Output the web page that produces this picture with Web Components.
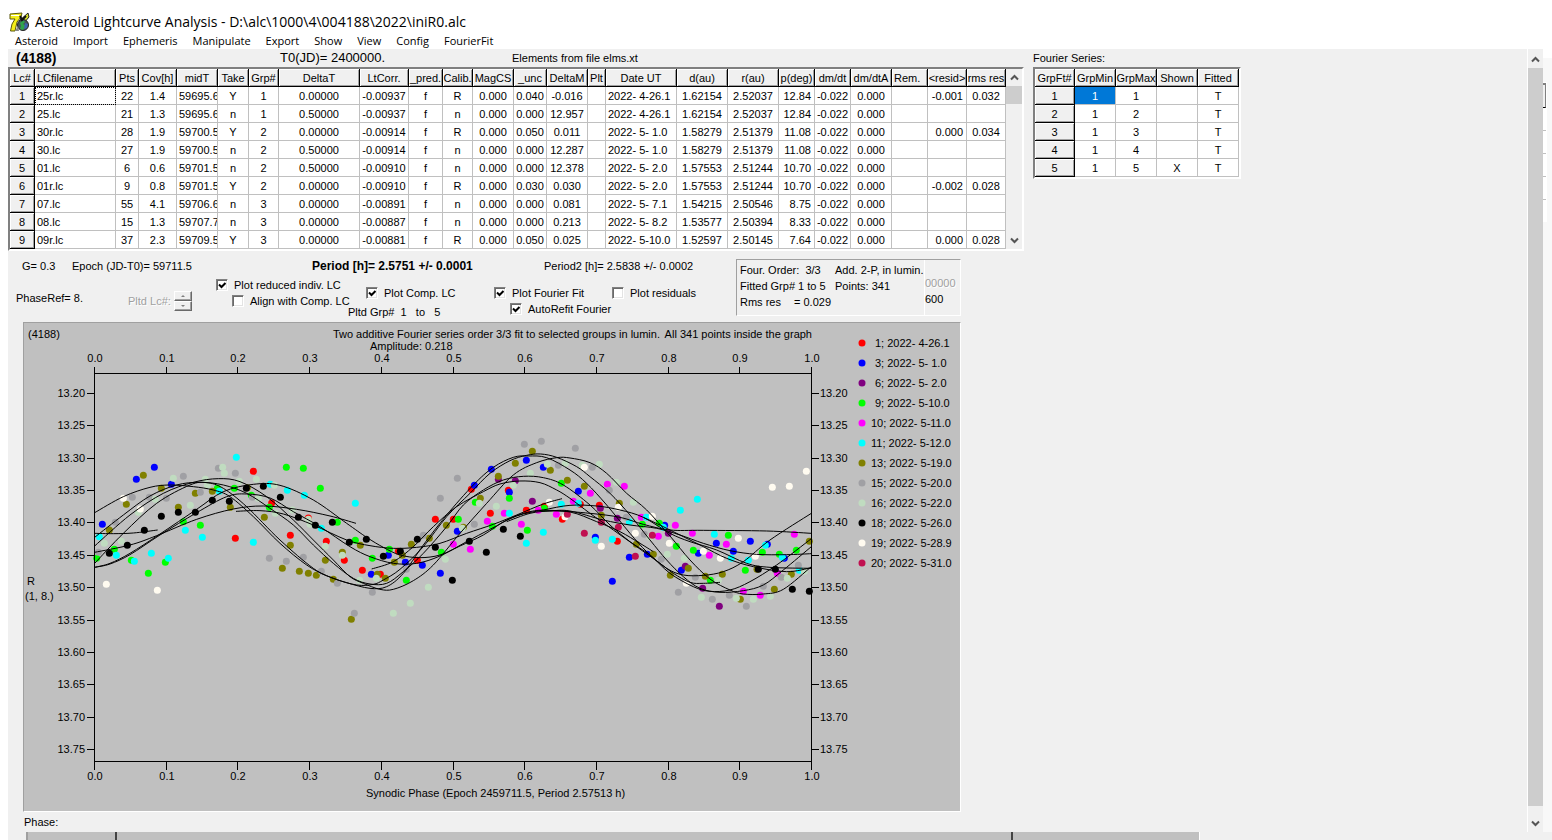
<!DOCTYPE html>
<html lang="en">
<head>
<meta charset="utf-8">
<title>Asteroid Lightcurve Analysis</title>
<style>
html,body{margin:0;height:100%;background:#fff;overflow:hidden}
body{font:11px/14px "Liberation Sans",Arial,sans-serif;color:#000}
</style>
</head>
<body>
<alc-window></alc-window>
<script>
const define = (name, css, html, setup) => customElements.define(name, class extends HTMLElement {
  constructor() {
    super();
    const root = this.attachShadow({mode: 'open'});
    root.innerHTML = `<style>*{box-sizing:border-box}button{font:inherit;color:inherit;border:0;background:none;padding:0;margin:0}${css}</style>${html}`;
    this.setup = setup;
  }
  connectedCallback() { if (this.setup && !this.ready) { this.ready = true; this.setup(this.shadowRoot); } }
});

/* Title bar with the application icon */
define('alc-title', `
:host{display:flex;align-items:center;gap:5px;height:33px;padding:11px 0 0 9px;font:14px/20px "Open Sans","Noto Sans",sans-serif;white-space:pre}
svg{display:block;flex:none}`, `
<svg width="21" height="21" viewBox="0 0 21 21" aria-hidden="true">
<path d="M1 2 L13 1 L12 5 L8 10 L6 19 L1.500 19 L3 12 L6 7 L1 7Z" fill="#f4ee18" stroke="#5a570c"/>
<path d="M2 3.500H10" stroke="#fff" stroke-width="1"/>
<path d="M10 9 L19 1 L20 5 L15 11Z" fill="#d9e02a" stroke="#222"/>
<circle cx="14" cy="13" r="5.500" fill="#45555c" stroke="#222"/>
<path d="M11 11q3-4 5-1l-2 2 3 2-3 4-3-1 1-3z" fill="#2fa34a"/>
<path d="M16 11l3 1-1 4-3 1z" fill="#3d62b0"/>
<path d="M11 4l2 4 4-4" fill="none" stroke="#111" stroke-width="2"/>
<path d="M6 19l3-5 1 5z" fill="#888"/>
</svg><slot></slot>`);

/* Menu bar */
define('alc-menu', `
:host{display:flex;gap:15px;height:16px;padding-left:15px;font:11px/16px "Open Sans","Noto Sans",sans-serif}`, '', root => {
  for (const t of ['Asteroid','Import','Ephemeris','Manipulate','Export','Show','View','Config','FourierFit']) {
    const b = document.createElement('button'); b.type = 'button'; b.textContent = t; root.append(b);
  }
});

/* Vertical scroll bar: thumb size is given in --thumb */
define('scroll-rail', `
:host{display:flex;flex-direction:column;width:16px;background:#f0f0f0}
button{flex:none;height:17px;display:flex;align-items:center;justify-content:center}
.track{flex:1;min-height:0}
.thumb{height:var(--thumb,20px);background:#cdcdcd}`, `
<button type="button" aria-label="Scroll up"><svg width="9" height="7"><path d="M1 5.500L4.500 2L8 5.500" fill="none" stroke="#555" stroke-width="2"/></svg></button>
<div class="track"><div class="thumb"></div></div>
<button type="button" aria-label="Scroll down"><svg width="9" height="7"><path d="M1 1.500L4.500 5L8 1.500" fill="none" stroke="#555" stroke-width="2"/></svg></button>`);

/* Spreadsheet grid with fixed first row and column */
const GRIDS = {
  lc: {
    widths: [25,81,23,38,41,31,30,81,49,34,30,41,33,41,18,71,51,51,36,36,41,36,39,39],
    align: 'clcclcccccccccclccrcclrc',
    head: ['Lc#','LCfilename','Pts','Cov[h]','midT','Take','Grp#','DeltaT','LtCorr.','_pred.','Calib.','MagCS','_unc','DeltaM','Plt','Date UT','d(au)','r(au)','p(deg)','dm/dt','dm/dtA','Rem.','<resid>','rms res'],
    rows: `1|25r.lc|22|1.4|59695.6|Y|1|0.00000|-0.00937|f|R|0.000|0.040|-0.016||2022- 4-26.1|1.62154|2.52037|12.84|-0.022|0.000||-0.001|0.032
2|25.lc|21|1.3|59695.6|n|1|0.50000|-0.00937|f|n|0.000|0.000|12.957||2022- 4-26.1|1.62154|2.52037|12.84|-0.022|0.000|||
3|30r.lc|28|1.9|59700.5|Y|2|0.00000|-0.00914|f|R|0.000|0.050|0.011||2022- 5- 1.0|1.58279|2.51379|11.08|-0.022|0.000||0.000|0.034
4|30.lc|27|1.9|59700.5|n|2|0.50000|-0.00914|f|n|0.000|0.000|12.287||2022- 5- 1.0|1.58279|2.51379|11.08|-0.022|0.000|||
5|01.lc|6|0.6|59701.5|n|2|0.50000|-0.00910|f|n|0.000|0.000|12.378||2022- 5- 2.0|1.57553|2.51244|10.70|-0.022|0.000|||
6|01r.lc|9|0.8|59701.5|Y|2|0.00000|-0.00910|f|R|0.000|0.030|0.030||2022- 5- 2.0|1.57553|2.51244|10.70|-0.022|0.000||-0.002|0.028
7|07.lc|55|4.1|59706.6|n|3|0.00000|-0.00891|f|n|0.000|0.000|0.081||2022- 5- 7.1|1.54215|2.50546|8.75|-0.022|0.000|||
8|08.lc|15|1.3|59707.7|n|3|0.00000|-0.00887|f|n|0.000|0.000|0.213||2022- 5- 8.2|1.53577|2.50394|8.33|-0.022|0.000|||
9|09r.lc|37|2.3|59709.5|Y|3|0.00000|-0.00881|f|R|0.000|0.050|0.025||2022- 5-10.0|1.52597|2.50145|7.64|-0.022|0.000||0.000|0.028`
  },
  fourier: {
    widths: [40,41,41,41,41], align: 'ccccc',
    head: ['GrpFt#','GrpMin','GrpMax','Shown','Fitted'],
    rows: `1|1|1||T
2|1|2||T
3|1|3||T
4|1|4||T
5|1|5|X|T`
  }
};
define('data-grid', `
:host{display:flex;border:2px solid;border-color:#808080 #fff #fff #808080;background:#fff}
table{border-collapse:separate;border-spacing:0;table-layout:fixed;line-height:14px}
th,td{height:18px;padding:0;font-weight:400;white-space:pre;overflow:hidden;text-align:center;border-right:1px solid #c0c0c0;border-bottom:1px solid #c0c0c0}
th{background:#f0f0f0;border-color:#000;box-shadow:inset 1px 1px #fff,inset -1px -1px #a0a0a0}
.l{text-align:left;padding-left:2px}
.r{text-align:right;padding-right:3px}
.focus{outline:1px dotted #000;outline-offset:-1px}
.sel{background:#0078d7;color:#fff}`, `<table><thead></thead><tbody></tbody></table><slot></slot>`, function (root) {
  const kind = this.getAttribute('kind'), g = GRIDS[kind], table = root.querySelector('table');
  table.style.width = g.widths.reduce((a, b) => a + b) + 'px';
  const cell = (tag, text, cls, scope) => {
    const c = document.createElement(tag); c.textContent = text; c.className = cls; if (scope) c.scope = scope; return c;
  };
  const hr = document.createElement('tr');
  g.head.forEach((t, i) => {
    const c = cell('th', t, i === 1 && kind === 'lc' || t === 'Rem.' ? 'l' : '', 'col');
    c.style.width = g.widths[i] + 'px'; hr.append(c);
  });
  root.querySelector('thead').append(hr);
  g.rows.split('\n').forEach((line, r) => {
    const tr = document.createElement('tr');
    line.split('|').forEach((t, i) => {
      const c = i ? cell('td', t, g.align[i]) : cell('th', t, '', 'row');
      if (r === 0 && i === 1) c.classList.add(kind === 'lc' ? 'focus' : 'sel');
      tr.append(c);
    });
    root.querySelector('tbody').append(tr);
  });
});

/* Sunken tick box with its label */
define('check-option', `
:host{display:block;height:16px}
label{display:flex;align-items:center;gap:6px;height:16px;white-space:pre}
input{appearance:none;flex:none;width:12px;height:12px;margin:0;background:#fff;border:1px solid;border-color:#808080 #fff #fff #808080;box-shadow:inset 1px 1px #696969,inset -1px -1px #e3e3e3}
input:checked{background:#fff url("data:image/svg+xml,%3Csvg xmlns='http://www.w3.org/2000/svg' width='10' height='10'%3E%3Cpath d='M2 4.500L4.500 7L8.500 3' fill='none' stroke='black' stroke-width='2'/%3E%3C/svg%3E") center no-repeat}`,
`<label><input type="checkbox"><slot></slot></label>`, function (root) {
  root.querySelector('input').checked = this.hasAttribute('checked');
});

/* Disabled up/down stepper */
define('spin-pair', `
:host{display:flex;flex-direction:column;width:18px}
button{display:flex;align-items:center;justify-content:center;width:18px;height:10px;border:1px solid;border-color:#fff #696969 #696969 #fff;box-shadow:inset -1px -1px #a0a0a0}`, `
<button type="button" disabled aria-label="Next"><svg width="4" height="2"><path d="M0 2L2 0L4 2Z" fill="#808080"/></svg></button>
<button type="button" disabled aria-label="Previous"><svg width="4" height="2"><path d="M0 0L2 2L4 0Z" fill="#808080"/></svg></button>`);

/* Period read-outs and plot options */
define('plot-options', `
:host{display:block;width:728px}
.read{display:grid;grid-template-columns:50px 240px 232px auto;padding:8px 0 0 14px;height:26px}
.read b{font-size:12px}
.opts{display:grid;grid-template-columns:112px 88px 150px 128px 118px auto;padding-left:8px}
.mid{padding-top:8px}
.phase{padding-top:14px}
.spin{display:flex;align-items:center;gap:3px;padding-top:14px;height:34px;color:#a0a0a0;text-shadow:1px 1px #fff}
.indent{margin-left:16px}
.grp{margin:4px 0 0 -18px;white-space:pre}`, `
<div class="read"><span>G= 0.3</span><span>Epoch (JD-T0)= 59711.5</span><b>Period [h]= 2.5751 +/- 0.0001</b><span>Period2 [h]= 2.5838 +/- 0.0002</span></div>
<div class="opts">
<div class="phase">PhaseRef= 8.</div>
<div class="spin"><span>Pltd Lc#:</span><spin-pair></spin-pair></div>
<div><check-option checked>Plot reduced indiv. LC</check-option><check-option class="indent">Align with Comp. LC</check-option></div>
<div class="mid"><check-option checked>Plot Comp. LC</check-option><div class="grp">Pltd Grp#  1   to   5</div></div>
<div class="mid"><check-option checked>Plot Fourier Fit</check-option><check-option checked class="indent">AutoRefit Fourier</check-option></div>
<div class="mid"><check-option>Plot residuals</check-option></div>
</div>`);

/* Summary of the Fourier fit */
define('fit-summary', `
:host{display:flex;width:225px;height:57px;margin-top:8px;border:1px solid;border-color:#a0a0a0 #fff #fff #a0a0a0;line-height:16px}
.main{display:grid;grid-template-columns:54px 41px auto;grid-auto-rows:16px;padding:2px 0 0 3px;width:188px;border-right:1px solid #fff}
.main span{white-space:pre}
.wide{grid-column:span 2}
.side{padding-top:15px}
.off{color:#a0a0a0;text-shadow:1px 1px #fff}`, `
<div class="main"><span class="wide">Four. Order:  3/3</span><span>Add. 2-P, in lumin.</span>
<span class="wide">Fitted Grp# 1 to 5</span><span>Points: 341</span>
<span>Rms res</span><span>= 0.029</span></div>
<div class="side"><div class="off">00000</div><div>600</div></div>`);

/* Composite light curve. Marks are kept per tile, three units to the pixel. */
const SERIES = [
  ['1; 2022- 4-26.1','#f00'],['3; 2022- 5- 1.0','#00f'],['6; 2022- 5- 2.0','#800080'],['9; 2022- 5-10.0','#0f0'],
  ['10; 2022- 5-11.0','#f0f'],['11; 2022- 5-12.0','#0ff'],['13; 2022- 5-19.0','#808000'],['15; 2022- 5-20.0','#a0a0a4'],
  ['16; 2022- 5-22.0','#c0dcc0'],['18; 2022- 5-26.0','#000'],['19; 2022- 5-28.9','#fffbf0'],['20; 2022- 5-31.0','#c01050']];
const TILE_SHIFT = [0, 810, 1470];
const MARKS = [
 ['520,124 466,325 575,219 631,316 739,334 793,391 847,421 685,264','91,433 145,364 202,391 256,268 310,268 364,178 421,250 475,181 529,241 583,229 637,268','31,223 88,226 142,334'],
 ['223,112 169,148 274,163 67,283','64,433 115,376 166,397 217,406 271,430 322,304 373,166 424,118 478,187 529,91 580,112','25,184 76,322 127,454 178,382 232,373 284,286 334,421 385,370 439,340 490,364 541,334 592,343 643,385'],
 ['','445,148 496,152 547,214','91,235 142,265 295,310 346,409 398,475 448,529'],
 ['619,112 670,115 721,175 412,175 463,175 514,196 568,232 310,275 361,286 103,358 154,391 256,397 205,430 50,385 772,277 826,331','67,385 118,358 169,451 274,367 325,268 376,217 427,289 478,205 532,301 583,235 634,160','217,283 268,280 319,349 370,361 421,451 475,316 526,421 577,367 628,373 679,361'],
 ['','310,343 361,358 412,274 463,250 514,283 565,241 619,253','10,214 61,190 112,163 163,169 214,262 265,319 316,286 367,310 418,376 469,343 520,484 571,496 622,430 673,313'],
 ['469,82 571,163 622,181 673,196 826,220 418,184 316,301 367,322 520,337 58,320 109,376 163,394 214,370 265,385 724,295','478,250 529,340 580,307 634,223','25,220 76,331 127,328 178,275 229,262 280,292 331,241 382,208 433,313 484,385 535,391 586,346 637,382 688,421'],
 ['190,136 244,175 139,223 88,300 295,232 346,190 397,184 451,232 553,262 502,173 631,346 736,391 787,367 841,346 607,415 658,424 685,430 709,436 760,448 814,568','82,433 106,445 133,397 157,376 184,343 238,325 289,286 340,292 391,205 445,139 496,100 547,64 601,121 652,151','43,169 148,220 94,256 199,343 250,373 301,436 355,415 406,439 457,433 511,508 561,418 613,478 664,433 718,334'],
 ['310,139 157,202 208,202 259,205 361,187 415,115 466,130 106,277 55,367 517,202 568,385 619,394 670,382 724,424 772,460 823,550','67,487 169,418 220,316 271,205 322,145 373,283 523,43 574,34 625,106','16,55 67,112 118,181 169,262 223,313 274,388 325,487 376,442 427,508 478,496 529,529 580,469 634,442 685,406'],
 ['280,145 376,148 428,112 433,130 478,154 529,148 583,166 382,166 226,208 175,247 331,226 73,340 124,334 535,205 586,250 637,240 685,268 690,283 736,349 787,376 839,451','79,445 130,550 181,520 235,472 286,388 337,295 388,220 439,229 490,166 541,130 592,103 646,100','88,103 37,106 139,157 190,217 240,322 292,373 343,385 394,502 445,451 499,505 550,508 601,499 652,445 703,424'],
 ['88,370 142,346 193,301 244,259 295,247 346,247 397,211 448,214 499,175 550,169 601,202 655,262 706,286 757,277 808,337 859,328','151,364 100,379 202,328 256,352 358,334 409,367 460,298 511,319 307,451','565,418 616,418 667,478 718,484'],
 ['130,205 181,237 79,463 232,481','598,217 645,260','43,112 145,232 196,310 247,259 298,340 349,460 400,364 451,385 505,325 556,379 607,172 658,169 709,124 94,349'],
 ['','652,253','43,310 94,277 145,292 196,379 247,316']];
const CURVES = [
 '44,348 150,255 250,190 340,157 415,146 480,155 560,200 640,270 700,330 760,390 810,440 850,460 900,478 940,478 1000,452 1060,405 1140,310 1220,220 1300,135 1370,98 1430,83 1470,84 1530,98 1580,130 1640,190 1700,240 1770,318 1830,390 1890,447 1950,480 1990,492 2050,492 2110,478 2194,410',
 '44,400 130,310 230,220 330,165 380,158 430,175 500,230 600,330 700,415 760,445 830,465 880,463 910,450 960,418 1030,350 1100,260 1170,190 1230,130 1290,92 1340,76 1382,72 1430,82 1490,110 1530,140 1590,190 1650,255 1710,330 1760,390 1810,440 1860,475 1920,487 1990,482 2050,465 2110,420 2194,350',
 '44,248 130,200 210,172 270,165 340,170 400,180 450,200 520,260 600,340 680,405 740,437 800,458 870,475 920,470 970,430 1030,345 1100,255 1180,165 1240,112 1300,82 1345,78 1400,83 1470,120 1520,160 1580,225 1650,310 1700,365 1760,415 1810,435 1870,436 1930,425 1990,395 2070,330 2194,250',
 '44,322 130,255 210,198 290,165 360,157 430,165 500,190 570,235 640,285 700,345 760,400 820,445 870,462 920,460 970,425 1030,370 1100,290 1150,225 1210,180 1270,150 1330,139 1390,143 1450,165 1530,225 1590,285 1650,335 1710,375 1770,430 1840,470 1890,484 1950,480 2010,455 2090,405 2194,326',
 '44,412 90,400 150,370 240,312 350,238 430,185 520,163 600,166 700,210 800,280 860,322 910,352 960,375 1020,383 1080,375 1140,348 1210,315 1280,270 1350,245 1410,241 1530,250 1620,262 1690,283 1770,300 1870,301 2060,303 2194,310',
 '44,412 90,402 150,374 240,315 350,248 440,200 500,192 570,204 640,245 720,290 810,350 870,380 940,400 1010,400 1080,378 1160,335 1230,298 1310,258 1390,240 1470,226 1550,228 1620,240 1690,262 1770,310 1830,335 1910,360 2000,400 2070,412 2194,415',
 '44,367 150,345 230,317 350,268 460,237 550,228 650,238 750,258 828,280',
 '44,310 100,311 160,309 233,300',
 '468,244 540,242 610,252 700,285 800,330 870,347 940,355 1010,352 1080,340 1160,310 1240,283 1310,255 1390,222 1446,206',
 '875,417 940,395 1000,350 1060,290 1130,230 1210,185 1260,162 1320,153 1380,158 1430,180 1470,205 1530,250 1600,300 1670,350 1740,400 1780,430 1830,457 1870,460 1920,457',
 '1280,275 1350,250 1410,243 1470,243 1570,270 1650,285 1730,295 1800,315 1870,340 1950,362 2030,373 2120,374 2194,371',
 '1380,243 1470,246 1550,275 1620,305 1680,340 1720,365',
 '1690,262 1750,290 1810,320 1870,350 1940,385 2020,410 2120,425 2194,413'];
const smooth = text => {
  const p = text.split(' ').map(s => s.split(',').map(Number));
  let d = 'M' + p[0];
  for (let i = 0; i < p.length - 1; i++) {
    const a = p[i - 1] || p[i], b = p[i], c = p[i + 1], e = p[i + 2] || c;
    d += `C${b[0] + (c[0] - a[0]) / 6} ${b[1] + (c[1] - a[1]) / 6} ${c[0] - (e[0] - b[0]) / 6} ${c[1] - (e[1] - b[1]) / 6} ${c[0]} ${c[1]}`;
  }
  return d;
};
define('light-plot', `
:host{display:block;width:938px;margin-left:15px;background:#c0c0c0;border:1px solid;border-color:#a0a0a0 #fff #fff #a0a0a0}
svg{display:block;width:100%}
text{white-space:pre}
.e{text-anchor:end}.m{text-anchor:middle}`, '', root => {
  const X = i => 71 + Math.round(i * 71.7), Y = i => 70 + Math.round(i * 32.36);
  let axes = 'M71 43V446M788 43V446M71 50H788M71 438H788', t = '';
  for (let i = 0; i <= 10; i++) {
    const v = (i / 10).toFixed(1);
    axes += `M${X(i)} 43V50M${X(i)} 438V446`;
    t += `<text class="m" x="${X(i)}" y="39">${v}</text><text class="m" x="${X(i)}" y="457">${v}</text>`;
  }
  for (let i = 0; i < 12; i++) {
    const v = (13.2 + i * .05).toFixed(2);
    axes += `M63 ${Y(i)}H71M788 ${Y(i)}H795`;
    t += `<text class="e" x="61" y="${Y(i) + 4}">${v}</text><text x="796" y="${Y(i) + 4}">${v}</text>`;
  }
  let dots = '';
  MARKS.forEach((tiles, s) => tiles.forEach((str, k) => str && str.split(' ').forEach(q => {
    const [x, y] = q.split(',').map(Number);
    dots += `<circle cx="${x + TILE_SHIFT[k]}" cy="${y}" r="10.500" fill="${SERIES[s][1]}"/>`;
  })));
  SERIES.forEach(([name, c], i) => {
    t += `<circle cx="838" cy="${20 + i * 20}" r="3.500" fill="${c}"/><text x="${i < 4 ? 851 : 847}" y="${24 + i * 20}">${name}</text>`;
  });
  root.innerHTML += `<svg viewBox="0 0 936 488" role="img" aria-label="Composite light curve">
<g transform="translate(56 107) scale(.33333)">${dots}<g fill="none" stroke="#000" stroke-width="3">${CURVES.map(c => `<path d="${smooth(c)}"/>`).join('')}</g></g>
<path d="${axes}" transform="translate(-.5 .5)" fill="none" stroke="#000" shape-rendering="crispEdges"/>
<g font-size="11">${t}
<text x="4" y="15">(4188)</text>
<text class="e" x="636" y="15">Two additive Fourier series order 3/3 fit to selected groups in lumin.</text>
<text class="e" x="788" y="15">All 341 points inside the graph</text>
<text x="346" y="27">Amplitude: 0.218</text>
<text x="3" y="262">R</text><text x="1" y="277">(1, 8.)</text>
<text x="342" y="474">Synodic Phase (Epoch 2459711.5, Period 2.57513 h)</text></g></svg>`;
});

/* Sliver of the window lying behind, at the right edge */
define('back-window', `
:host{display:block;width:9px;padding-top:9px;background:#fff}
.pane{height:100%;background:#f8f8f8;padding-top:24px}
.box{width:4px;height:140px;border:1px solid #fff;border-left:0;background:#fff}
.head{height:25px;border:1px solid #808080;border-width:2px 1px 1px 0;border-bottom-color:#000;background:#f0f0f0}
.line{height:23px;border-bottom:1px solid #c0c0c0}`,
`<div class="pane"><div class="box"><div class="head"></div><div class="line"></div><div class="line"></div><div class="line"></div><div class="line"></div></div></div>`);

/* Phase strip along the bottom */
define('phase-strip', `
:host{display:flex;flex:none;height:8px;margin-left:8px;background:#f0f0f0;padding-left:18px}
.bar{display:grid;grid-template-columns:89px 896px 187px;border-left:2px solid #a0a0a0}
i{background:#c0c0c0;border-right:2px solid #444}
i:last-child{border-right:1px solid #fff}`, `<div class="bar"><i></i><i></i><i></i></div>`);

define('alc-window', `
:host{display:flex;flex-direction:column;height:100vh;overflow:hidden}
alc-title,alc-menu{flex:none}
.client{flex:1;min-height:0;display:flex;margin-left:8px;background:#f0f0f0}
main{flex:1;min-width:0;overflow:hidden;display:flex;align-items:flex-start;gap:9px}
.left{width:1016px;flex:none}
.caption{display:grid;grid-template-columns:264px 232px auto;align-items:center;height:18px;padding-left:8px;white-space:pre}
.caption b{font-size:14px}
.caption .t0{font-size:13px}
.controls{display:flex;height:71px}
.series{display:block;height:18px;line-height:18px}
.phase{height:20px;line-height:20px;padding-left:16px}
.page{--thumb:738px;border-left:1px solid #fff;padding-top:2px}
.inner{--thumb:18px}`, `
<alc-title>Asteroid Lightcurve Analysis - D:\\alc\\1000\\4\\004188\\2022\\iniR0.alc</alc-title>
<alc-menu></alc-menu>
<div class="client">
<main>
<div class="left">
<div class="caption"><b>(4188)</b><span class="t0">T0(JD)= 2400000.</span><span>Elements from file elms.xt</span></div>
<data-grid kind="lc"><scroll-rail class="inner"></scroll-rail></data-grid>
<div class="controls"><plot-options></plot-options><fit-summary></fit-summary></div>
<light-plot></light-plot>
<div class="phase">Phase:</div>
</div>
<div><span class="series">Fourier Series:</span><data-grid kind="fourier"></data-grid></div>
</main>
<scroll-rail class="page"></scroll-rail>
<back-window></back-window>
</div>
<phase-strip></phase-strip>`);
</script>
</body>
</html>
